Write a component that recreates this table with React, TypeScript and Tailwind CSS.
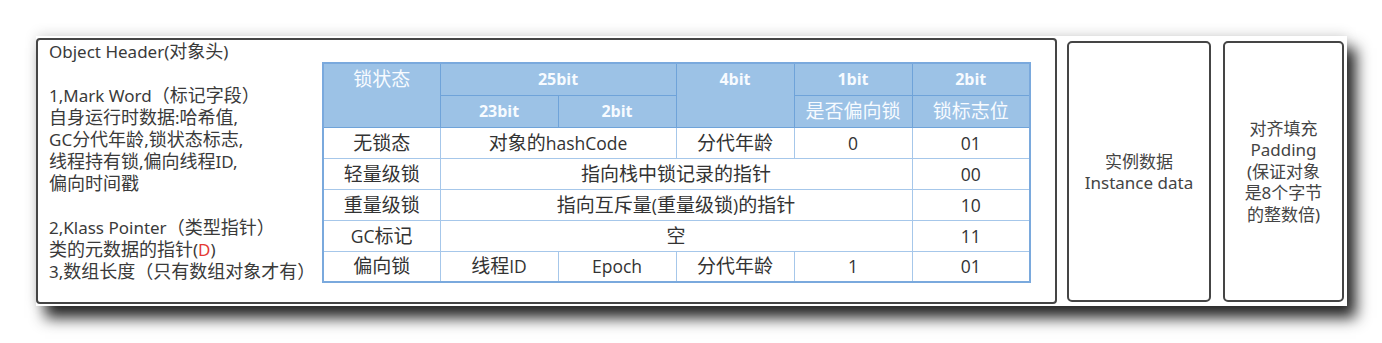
import React from "react";

const font = { fontFamily: '"Noto Sans", "Noto Sans CJK SC", sans-serif' };

// wrap runs of CJK text so they can be sized a little larger than the latin text
const Mixed = ({ text, cjk }: { text: string; cjk: string }) => {
    const parts = text.split(/([\u4e00-\u9fff（）]+)/);
    return (
        <>
            {parts.map((p, i) =>
                /[\u4e00-\u9fff（）]/.test(p) ? (
                    <span key={i} className={cjk}>{p}</span>
                ) : (
                    <React.Fragment key={i}>{p}</React.Fragment>
                )
            )}
        </>
    );
};

const headCell = "border border-[#6fa3d9] bg-[#9cc2e6] text-[#f7fbff] font-bold align-top pt-[3px] text-[16px] leading-[24px]";
const headCjk = "border border-[#6fa3d9] bg-[#9cc2e6] text-[#f7fbff] font-normal align-top pt-[3px] text-[19px] leading-[24px]";
const bodyCell = "border border-[#a6c7ea] text-center text-[17.5px] leading-[22px] text-[#333] h-[31px] p-0";

const Cell = ({ text, span }: { text: string; span?: number }) => (
    <td colSpan={span} className={bodyCell}>
        <Mixed text={text} cjk="text-[19px]" />
    </td>
);

const ObjectLayoutTable = () => {
    return (
        <table
            className="self-start table-fixed border-collapse w-[707px] mt-[22px] border-2 border-[#7aa9dd]"
            style={{ fontFamily: '"Open Sans", "Noto Sans CJK SC", sans-serif' }}
        >
            <colgroup>
                <col className="w-[117px]" />
                <col className="w-[118px]" />
                <col className="w-[118px]" />
                <col className="w-[118px]" />
                <col className="w-[118px]" />
                <col className="w-[118px]" />
            </colgroup>
            <thead>
                <tr className="h-[32px]">
                    <th rowSpan={2} className={headCjk}>锁状态</th>
                    <th colSpan={2} className={headCell}>25bit</th>
                    <th rowSpan={2} className={headCell}>4bit</th>
                    <th className={headCell}>1bit</th>
                    <th className={headCell}>2bit</th>
                </tr>
                <tr className="h-[32px]">
                    <th className={headCell}>23bit</th>
                    <th className={headCell}>2bit</th>
                    <th className={headCjk}>是否偏向锁</th>
                    <th className={headCjk}>锁标志位</th>
                </tr>
            </thead>
            <tbody>
                <tr>
                    <Cell text="无锁态" />
                    <Cell text="对象的hashCode" span={2} />
                    <Cell text="分代年龄" />
                    <Cell text="0" />
                    <Cell text="01" />
                </tr>
                <tr>
                    <Cell text="轻量级锁" />
                    <Cell text="指向栈中锁记录的指针" span={4} />
                    <Cell text="00" />
                </tr>
                <tr>
                    <Cell text="重量级锁" />
                    <Cell text="指向互斥量(重量级锁)的指针" span={4} />
                    <Cell text="10" />
                </tr>
                <tr>
                    <Cell text="GC标记" />
                    <Cell text="空" span={4} />
                    <Cell text="11" />
                </tr>
                <tr>
                    <Cell text="偏向锁" />
                    <Cell text="线程ID" />
                    <Cell text="Epoch" />
                    <Cell text="分代年龄" />
                    <Cell text="1" />
                    <Cell text="01" />
                </tr>
            </tbody>
        </table>
    );
};

const Line = ({ text }: { text: string }) => (
    <p className="h-[22px]">
        <Mixed text={text} cjk="text-[18px]" />
    </p>
);

const App = () => {
    return (
        <div className="w-[1382px] h-[343px] bg-white pt-[36px] pl-[36px]" style={font}>
            <div className="flex items-start w-[1311px] h-[270px] bg-white shadow-[0_-2px_12px_rgba(0,0,0,0.12),9px_12px_14px_rgba(0,0,0,0.85)]">
                {/* Object Header */}
                <div className="flex items-start mt-[2px] w-[1021px] h-[266px] border-2 border-[#454545] rounded-[4px]">
                    <div className="w-[284px] pl-[11px] text-[17px] leading-[22px] text-[#3a3a3a] whitespace-nowrap">
                        <Line text="Object Header(对象头)" />
                        <p className="h-[22px]" />
                        <Line text="1,Mark Word（标记字段）" />
                        <Line text="自身运行时数据:哈希值," />
                        <Line text="GC分代年龄,锁状态标志," />
                        <Line text="线程持有锁,偏向线程ID," />
                        <Line text="偏向时间戳" />
                        <p className="h-[22px]" />
                        <Line text="2,Klass Pointer（类型指针）" />
                        <p className="h-[22px]">
                            <span className="text-[18px]">类的元数据的指针</span>(<span className="text-[#e53935]">D</span>)
                        </p>
                        <Line text="3,数组长度（只有数组对象才有）" />
                    </div>
                    <ObjectLayoutTable />
                </div>
                {/* Instance data */}
                <div className="flex flex-col items-center justify-center ml-[10px] mt-[5px] w-[144px] h-[261px] border-2 border-[#454545] rounded-[5px] text-[17px] leading-[21px] text-[#444]">
                    <p>实例数据</p>
                    <p>Instance data</p>
                </div>
                {/* Padding */}
                <div className="flex flex-col items-center justify-center ml-[12px] mt-[5px] w-[121px] h-[261px] border-2 border-[#454545] rounded-[5px] text-[17px] leading-[21.5px] text-[#444] text-center">
                    <p>对齐填充</p>
                    <p>Padding</p>
                    <p>(保证对象</p>
                    <p>是8个字节</p>
                    <p>的整数倍)</p>
                </div>
            </div>
        </div>
    );
};

export default App;
